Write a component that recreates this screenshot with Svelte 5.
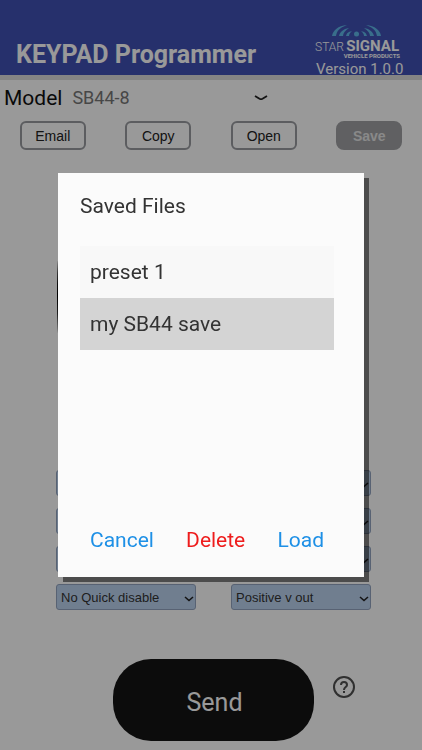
<script>
	let model = 'SB44-8';
	let files = ['preset 1', 'my SB44 save'];
	let selected = 'my SB44 save';

	let options = [
		['', ''],
		['', ''],
		['', ''],
		['No Quick disable', 'Positive v out']
	];
</script>

<div class="page">
	<header>
		<h1>KEYPAD Programmer</h1>
		<div class="brand">
			<svg class="logo" width="93" height="36" viewBox="0 0 93 36" role="img" aria-label="Star Signal">
				<g fill="#5fb8e8">
					<path d="M18 12C19 6 24 2 33 1C25 4 23 7 22 12Z" />
					<path d="M67 12C66 6 61 2 52 1C60 4 62 7 63 12Z" />
					<path d="M25 12C26 8 29 5 35 4C31 7 29 9 29 12Z" />
					<path d="M60 12C59 8 56 5 50 4C54 7 56 9 56 12Z" />
					<path d="M32 12C33 9 34 8 38 7C36 9 35 10 35 12Z" />
					<path d="M53 12C52 9 51 8 47 7C49 9 50 10 50 12Z" />
					<circle cx="42.500" cy="10" r="2.500" />
				</g>
				<text class="star" x="30" y="27" text-anchor="end">STAR</text>
				<text class="signal" x="85" y="27" text-anchor="end">SIGNAL</text>
				<text class="products" x="86" y="34" text-anchor="end">VEHICLE PRODUCTS</text>
			</svg>
			<div class="version">Version 1.0.0</div>
		</div>
	</header>

	<div class="model-row">
		<label for="model">Model</label>
		<div class="model-select">
			<select id="model" bind:value={model}>
				<option>SB44-8</option>
			</select>
			<svg width="14" height="6" viewBox="0 0 14 6">
				<path d="M1 1L5.500 3.800Q7 4.600 8.500 3.800L13 1" fill="none" stroke="#222" stroke-width="1.800" />
			</svg>
		</div>
	</div>

	<div class="toolbar">
		<button>Email</button>
		<button>Copy</button>
		<button>Open</button>
		<button class="save">Save</button>
	</div>

	<main>
		<svg class="keypad" viewBox="0 0 310 220" preserveAspectRatio="none">
			<path
				d="M60 0H240Q285 2 300 60Q308 84 308 96Q308 108 300 140Q285 218 240 220H60Q14 218 4 160Q1 130 1 96Q1 60 4 40Q14 2 60 0Z"
				fill="#000"
			/>
		</svg>

		<div class="options">
			{#each options as row, i}
				{#each row as option, j}
					<div class="option">
						<select aria-label="Option {i * 2 + j + 1}">
							<option>{option}</option>
						</select>
						<svg width="10" height="6" viewBox="0 0 10 6">
							<path d="M1 1L5 4.500L9 1" fill="none" stroke="#222" stroke-width="1.600" />
						</svg>
					</div>
				{/each}
			{/each}
		</div>
	</main>

	<footer>
		<button class="send">Send</button>
		<button class="help" aria-label="Help">
			<svg width="24" height="24" viewBox="0 0 24 24">
				<circle cx="12" cy="12" r="10" fill="none" stroke="#505050" stroke-width="2" />
				<path d="M9 10a3 3 0 0 1 6 0c0 2-3 2.250-3 5" fill="none" stroke="#505050" stroke-width="2" />
				<rect x="11" y="16" width="2" height="2" fill="#505050" />
			</svg>
		</button>
	</footer>
</div>

<div class="overlay">
	<div class="modal" role="dialog" aria-labelledby="modal-title">
		<h2 id="modal-title">Saved Files</h2>
		<div class="files">
			{#each files as file}
				<button class:selected={file === selected} on:click={() => (selected = file)}>{file}</button>
			{/each}
		</div>
		<div class="actions">
			<button>Cancel</button>
			<button class="delete">Delete</button>
			<button>Load</button>
		</div>
	</div>
</div>

<style>
	:global(body) {
		margin: 0;
		background: #fff;
	}
	.page,
	.overlay {
		font-family: Roboto, 'Liberation Sans', sans-serif;
	}
	.page {
		display: flex;
		flex-direction: column;
		min-height: 100vh;
		overflow: hidden;
	}
	button,
	select {
		appearance: none;
		margin: 0;
		padding: 0;
		border: none;
		background: none;
		font-family: inherit;
		cursor: pointer;
	}

	header {
		display: flex;
		justify-content: space-between;
		align-items: flex-end;
		box-sizing: border-box;
		height: 80px;
		padding: 0 15px 0 16px;
		background: #4051b5;
		border-bottom: 5px solid #dcdcdc;
		color: #fff;
	}
	h1 {
		margin: 0 0 5px;
		font-size: 25px;
		line-height: 30px;
		font-weight: 700;
	}
	.brand {
		width: 93px;
		height: 51px;
	}
	.logo {
		display: block;
	}
	.logo text {
		fill: #fff;
	}
	.logo .star {
		font-size: 12px;
		font-weight: 300;
	}
	.logo .signal {
		font-size: 15px;
		font-weight: 700;
	}
	.logo .products {
		font-size: 6px;
		font-weight: 700;
	}
	.version {
		padding-left: 2px;
		font-size: 15px;
		line-height: 18px;
		white-space: nowrap;
	}

	.model-row {
		display: flex;
		align-items: center;
		gap: 10px;
		height: 35px;
		padding-left: 4px;
	}
	.model-row label {
		font-size: 21px;
		color: #111;
	}
	.model-select {
		position: relative;
		width: 198px;
	}
	.model-select select {
		width: 100%;
		font-size: 18px;
		line-height: 24px;
		color: #777;
	}
	.model-select svg {
		position: absolute;
		right: 2px;
		top: 9px;
		pointer-events: none;
	}

	.toolbar {
		display: grid;
		grid-template-columns: repeat(4, 1fr);
		justify-items: center;
		padding: 6px 0 10px;
	}
	.toolbar button {
		box-sizing: border-box;
		width: 66px;
		height: 29px;
		border: 2px solid #999ba0;
		border-radius: 6px;
		font-family: 'Liberation Sans', Arial, sans-serif;
		font-size: 14px;
		color: #222;
	}
	.toolbar .save {
		background: #a0a1a4;
		border-color: #a0a1a4;
		border-radius: 8px;
		color: #e4e4e4;
		font-weight: 700;
	}

	main {
		display: flex;
		flex-direction: column;
		padding: 0 51px 0 56px;
	}
	.keypad {
		align-self: flex-start;
		width: calc(100% - 5px);
		height: 220px;
		margin: 40px 0 50px;
	}
	.options {
		display: grid;
		grid-template-columns: 1fr 1fr;
		gap: 12px 35px;
	}
	.option {
		position: relative;
	}
	.option select {
		box-sizing: border-box;
		display: block;
		width: 100%;
		height: 26px;
		padding-left: 4px;
		border: 1px solid #93a4c0;
		border-radius: 3px;
		background: #bbd2ef;
		font-family: 'Liberation Sans', Arial, sans-serif;
		font-size: 13px;
		color: #333;
	}
	.option svg {
		position: absolute;
		right: 2px;
		top: 12px;
		pointer-events: none;
	}

	footer {
		display: grid;
		grid-template-columns: 1fr 201px 1fr;
		gap: 18px;
		padding: 49px 0 9px;
		margin-left: 5px;
	}
	.send {
		grid-column: 2;
		height: 82px;
		padding: 4px 0 0 2px;
		border-radius: 38px;
		background: #151515;
		color: #fff;
		font-size: 25px;
	}
	.help {
		justify-self: start;
		align-self: start;
		margin-top: 16px;
	}
	.help svg {
		display: block;
	}

	.overlay {
		position: fixed;
		inset: 0;
		display: flex;
		align-items: center;
		justify-content: center;
		padding: 0 58px;
		background: rgba(0, 0, 0, 0.4);
	}
	.modal {
		flex: 1;
		padding: 18px 30px 20px 22px;
		background: #fbfbfb;
		box-shadow: 5px 5px 0 rgba(0, 0, 0, 0.5);
	}
	h2 {
		margin: 0 0 25px;
		font-size: 21px;
		line-height: 30px;
		font-weight: 400;
		color: #333;
	}
	.files {
		min-height: 277px;
	}
	.files button {
		display: block;
		width: 100%;
		height: 52px;
		padding: 0 10px;
		background: #f8f8f8;
		font-size: 21px;
		color: #333;
		text-align: left;
	}
	.files .selected {
		background: #d4d4d4;
	}
	.actions {
		display: flex;
		justify-content: space-between;
		padding: 0 10px;
	}
	.actions button {
		font-size: 21px;
		line-height: 34px;
		color: #1e90e6;
	}
	.actions .delete {
		color: #ee1c1c;
	}
</style>
